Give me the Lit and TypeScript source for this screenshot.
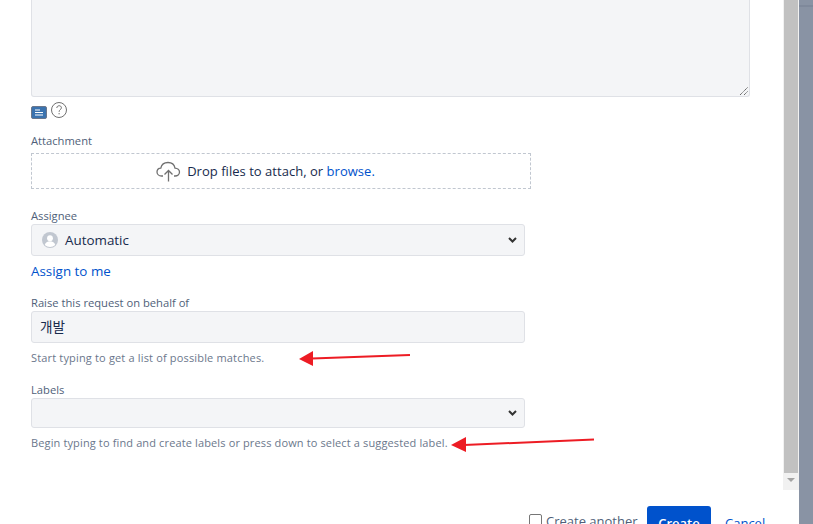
import { LitElement, html, css } from "lit";
import { customElement } from "lit/decorators.js";

@customElement("app-root")
export class AppRoot extends LitElement {
  static styles = css`
    :host { display: block; width: 813px; height: 524px; overflow: hidden; position: relative; background: #fff;
      font-family: "Open Sans", "Noto Sans CJK KR", sans-serif; color: #172b4d; font-size: 13px; }
    * { box-sizing: border-box; }
    .page { display: flex; height: 524px; }
    .dialog { width: 783px; display: flex; flex-direction: column; }
    .form { height: 490px; padding-left: 31px; display: flex; flex-direction: column; align-items: flex-start; }
    .textarea { width: 719px; height: 97px; background: #f4f5f7; border: 1px solid #dfe1e6; border-top: 0; border-radius: 0 0 3px 3px; position: relative; flex: none; }
    .grip { position: absolute; right: 0; bottom: 0; width: 10px; height: 10px; }
    .tools { display: flex; align-items: flex-start; gap: 4px; height: 21px; margin-top: 5px; }
    .doc { width: 16px; height: 13px; margin-top: 4px; background: #3b73af; border: 1px solid #6b778c; border-radius: 2px; display: flex; flex-direction: column; justify-content: center; align-items: center; }
    .q { display: block; }
    label, .label { display: block; font-size: 11.2px; line-height: 16px; color: #505f79; white-space: nowrap; }
    .attach-label { margin-top: 10px; }
    .drop { width: 500px; height: 36px; margin-top: 4px; padding-right: 31px; border: 1px dashed #c1c7d0; display: flex; align-items: center; justify-content: center; gap: 6px; white-space: nowrap; }
    .drop a, .link { color: #0052cc; }
    .drop span { letter-spacing: 0.03px; }
    .assignee-label { margin-top: 19px; }
    .field { width: 494px; background: #f4f5f7; border: 1px solid #dfe1e6; border-radius: 3px; display: flex; align-items: center; margin-top: 0; }
    .f32 { height: 32px; margin-top: 0; }
    .f30 { height: 30px; }
    .avatar { margin-left: 10px; margin-right: 7px; display: block; }
    .auto { font-size: 13.4px; }
    .chev { margin-left: auto; margin-right: 7px; display: block; }
    .assign { margin-top: 6px; line-height: 18px; font-size: 13.4px; }
    .raise { margin-top: 15px; }
    .input { padding-left: 8px; padding-bottom: 2px; font-size: 13.6px; }
    .hint { font-size: 11px; line-height: 14px; color: #6b778c; margin-top: 8px; white-space: nowrap; letter-spacing: 0.015em; }
    .hint.long { letter-spacing: 0.012em; }
    .labels { margin-top: 17px; }
    .footer { height: 34px; display: flex; align-items: flex-start; padding-top: 16px; padding-left: 529px; }
    .check { width: 13px; height: 13px; border: 1px solid #767676; border-radius: 2px; margin-top: 8px; flex: none; }
    .another { margin-left: 4px; width: 101px; font-size: 13px; line-height: 18px; margin-top: 6px; color: #505f79; white-space: nowrap; }
    .btn { width: 64px; height: 32px; background: #0052cc; color: #fff; font-weight: 600; border-radius: 3px; text-align: center; line-height: 34px; flex: none; }
    .cancel { margin-left: 14px; line-height: 34px; color: #0052cc; }
    .bar { width: 16px; height: 490px; background: #f1f1f1; display: flex; flex-direction: column; padding-left: 1px; flex: none; }
    .thumb { width: 14px; height: 473px; background: #c1c1c1; }
    .down { margin-top: 4px; display: block; }
    .side { flex: 1; background: #8993a4; }
    .band { height: 2px; margin-top: 5px; background: #7f899b; }
    .arrows { position: absolute; left: 0; top: 0; pointer-events: none; }
  `;

  render() {
    return html`
      <div class="page">
        <div class="dialog">
          <div class="form">
            <div class="textarea">
              <svg class="grip" viewBox="0 0 10 10"><path d="M1 9 9 1M5 9 9 5" stroke="#555" stroke-width="1" stroke-dasharray="1.2 .6" fill="none"/></svg>
            </div>
            <div class="tools">
              <div class="doc"><svg width="10" height="7" viewBox="0 0 10 7"><path d="M1 1h5M1 3.500h8M1 6h8" stroke="#fff"/></svg></div>
              <svg class="q" width="16" height="16" viewBox="0 0 16 16"><circle cx="8" cy="8" r="7.500" fill="none" stroke="#707070"/><path d="M5.800 6c0-3 4.600-3 4.600-.2 0 1.800-2.300 1.800-2.300 4" fill="none" stroke="#707070"/><path d="M8.100 11v1.300" stroke="#707070"/></svg>
            </div>
            <div class="label attach-label">Attachment</div>
            <div class="drop">
              <svg width="25" height="21" viewBox="0 0 25 21"><path d="M7 15H5.500C3 15 1 13.300 1 11c0-2.200 1.700-3.800 3.800-3.900C5.500 3.700 8.200 1.500 12 1.500c3.600 0 6.400 2.400 7 5.600 2.500.1 4.500 1.800 4.500 4 0 2.300-2 3.900-4.500 3.900h-1" fill="none" stroke="#707070" stroke-width="1.300"/><path d="M12.500 20.500V10M8.500 13.500l4-4 4 4" fill="none" stroke="#707070" stroke-width="1.300"/></svg>
              <span>Drop files to attach, or <a>browse.</a></span>
            </div>
            <label class="assignee-label">Assignee</label>
            <div class="field f32">
              <svg class="avatar" width="16" height="16" viewBox="0 0 16 16"><circle cx="8" cy="8" r="8" fill="#c1c7d0"/><circle cx="8" cy="6.200" r="2.900" fill="#fff"/><path d="M2.800 13c.6-2.600 2.600-3.700 5.200-3.700s4.600 1.100 5.200 3.700A7.500 7.500 0 0 1 2.800 13z" fill="#fff"/></svg>
              <span class="auto">Automatic</span>
              <svg class="chev" width="9" height="6" viewBox="0 0 9 6"><path d="M1 1l3.500 3.500L8 1" fill="none" stroke="#333" stroke-width="2"/></svg>
            </div>
            <div class="assign"><span class="link">Assign to me</span></div>
            <label class="raise">Raise this request on behalf of</label>
            <div class="field f32 input">개발</div>
            <div class="hint">Start typing to get a list of possible matches.</div>
            <label class="labels">Labels</label>
            <div class="field f30">
              <svg class="chev" width="9" height="6" viewBox="0 0 9 6"><path d="M1 1l3.500 3.500L8 1" fill="none" stroke="#333" stroke-width="2"/></svg>
            </div>
            <div class="hint long">Begin typing to find and create labels or press down to select a suggested label.</div>
          </div>
          <div class="footer">
            <div class="check"></div>
            <div class="another">Create another</div>
            <div class="btn">Create</div>
            <div class="cancel">Cancel</div>
          </div>
        </div>
        <div class="bar">
          <div class="thumb"></div>
          <svg class="down" width="14" height="6" viewBox="0 0 14 6"><path d="M3 1h8L7 5z" fill="#a3a3a3"/></svg>
        </div>
        <div class="side"><div class="band"></div></div>
      </div>
      <svg class="arrows" width="813" height="524" viewBox="0 0 813 524">
        <path d="M410 355 312 358.500" stroke="#ed1c24" stroke-width="2" fill="none"/>
        <path d="M299 359 313 351V366z" fill="#ed1c24"/>
        <path d="M594 439.500 464 445" stroke="#ed1c24" stroke-width="2" fill="none"/>
        <path d="M451 445 466 437V452z" fill="#ed1c24"/>
      </svg>
    `;
  }
}
